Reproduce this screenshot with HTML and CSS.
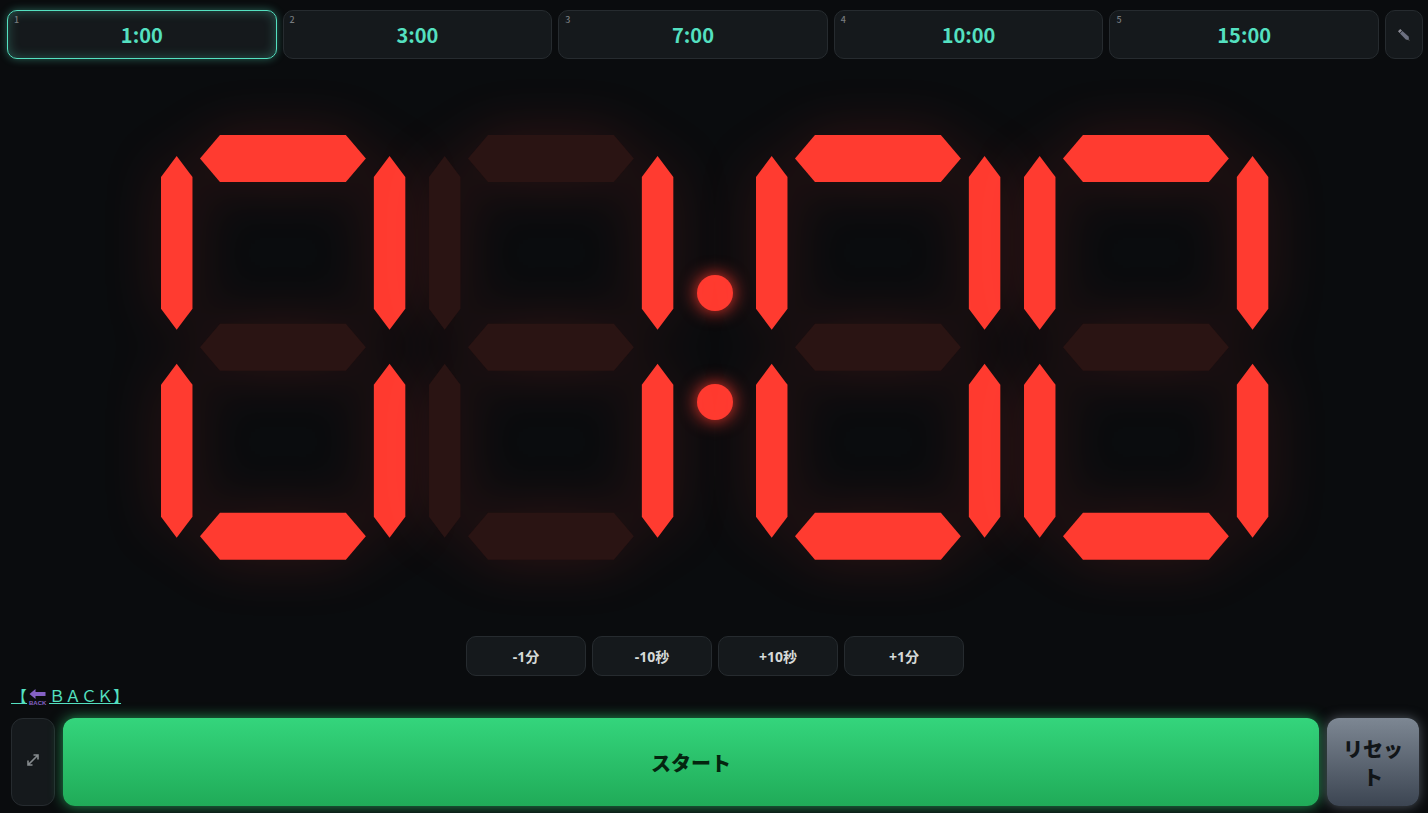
FILE: index.html
```html
<!DOCTYPE html>
<html lang="ja">

<head>
  <meta charset="UTF-8">
  <meta name="viewport" content="width=device-width, initial-scale=1">
  <title>タイマー</title>
  <link rel="stylesheet" href="styles.css">
</head>

<body>

  <!-- segment shapes shared by all digits -->
  <svg class="defs" width="0" height="0" aria-hidden="true">
    <defs>
      <polygon id="seg-h" points="0,23.5 20,0 146,0 166,23.5 146,47 20,47" />
      <polygon id="seg-v" points="15.7,0 31.5,21 31.5,153 15.7,174 0,153 0,21" />
    </defs>
  </svg>

  <nav class="presets">
    <button class="preset active"><span class="key">1</span>1:00</button>
    <button class="preset"><span class="key">2</span>3:00</button>
    <button class="preset"><span class="key">3</span>7:00</button>
    <button class="preset"><span class="key">4</span>10:00</button>
    <button class="preset"><span class="key">5</span>15:00</button>
    <button class="edit" aria-label="編集">
      <svg width="14" height="14" viewBox="0 0 14 14">
        <path d="M1 3.2 3.2 1 5 2.6 2.6 5z" fill="#8b8b95" />
        <path d="M3 5.4 5.4 3 11.6 8.6 12 10.6 10.6 12 8.8 11.4z" fill="#6c7080" />
        <path d="M11.6 11 13 12.8 11 12z" fill="#777" />
      </svg>
    </button>
  </nav>

  <main class="stage">
    <div class="clock" role="timer" aria-label="01:00">
      <svg class="digit" viewBox="0 0 245 425">
        <use class="on" href="#seg-h" x="39" y="0" />
        <use class="on" href="#seg-v" x="0" y="21" />
        <use class="on" href="#seg-v" x="213" y="21" />
        <use href="#seg-h" x="39" y="189" />
        <use class="on" href="#seg-v" x="0" y="229" />
        <use class="on" href="#seg-v" x="213" y="229" />
        <use class="on" href="#seg-h" x="39" y="378" />
      </svg>
      <svg class="digit" viewBox="0 0 245 425">
        <use href="#seg-h" x="39" y="0" />
        <use href="#seg-v" x="0" y="21" />
        <use class="on" href="#seg-v" x="213" y="21" />
        <use href="#seg-h" x="39" y="189" />
        <use href="#seg-v" x="0" y="229" />
        <use class="on" href="#seg-v" x="213" y="229" />
        <use href="#seg-h" x="39" y="378" />
      </svg>
      <div class="colon"><span></span><span></span></div>
      <svg class="digit" viewBox="0 0 245 425">
        <use class="on" href="#seg-h" x="39" y="0" />
        <use class="on" href="#seg-v" x="0" y="21" />
        <use class="on" href="#seg-v" x="213" y="21" />
        <use href="#seg-h" x="39" y="189" />
        <use class="on" href="#seg-v" x="0" y="229" />
        <use class="on" href="#seg-v" x="213" y="229" />
        <use class="on" href="#seg-h" x="39" y="378" />
      </svg>
      <svg class="digit" viewBox="0 0 245 425">
        <use class="on" href="#seg-h" x="39" y="0" />
        <use class="on" href="#seg-v" x="0" y="21" />
        <use class="on" href="#seg-v" x="213" y="21" />
        <use href="#seg-h" x="39" y="189" />
        <use class="on" href="#seg-v" x="0" y="229" />
        <use class="on" href="#seg-v" x="213" y="229" />
        <use class="on" href="#seg-h" x="39" y="378" />
      </svg>
    </div>
  </main>

  <div class="adjust">
    <button>-1分</button>
    <button>-10秒</button>
    <button>+10秒</button>
    <button>+1分</button>
  </div>

  <div class="back">
    <a href="#">【<svg class="back-icon" width="22" height="18" viewBox="0 0 22 18" aria-hidden="true"><path d="M2.5 6 8.5 1V4H18.5V8H8.5V11z" fill="#8561c5" /><text x="2" y="17">BACK</text></svg>ＢＡＣＫ<span class="half">】</span></a>
  </div>

  <footer class="controls">
    <button class="full" aria-label="全画面">
      <svg width="12" height="12" viewBox="0 0 12 12">
        <path d="M6.5 1H11V5.5M5.5 11H1V6.5M11 1 1 11" fill="none" stroke="#858a8d" stroke-width="1.6" />
      </svg>
    </button>
    <button class="start">スタート</button>
    <button class="reset">リセット</button>
  </footer>

</body>

</html>
```
FILE: styles.css
```css
:root {
  --bg: #0a0c0e;
  --panel: #15191c;
  --line: #262b2f;
  --accent: #54e0c0;
  --led: #ff3b30;
  --led-off: #2a1413;
}

* {
  box-sizing: border-box;
}

body {
  margin: 0;
  min-height: 100vh;
  padding: 10px 5px 7px 7px;
  display: flex;
  flex-direction: column;
  background-color: var(--bg);
  color: #d5dad8;
  font-family: "Noto Sans", "Noto Sans CJK JP", sans-serif;
  overflow: hidden;
}

button {
  margin: 0;
  padding: 0;
  border: 1px solid var(--line);
  border-radius: 10px;
  background-color: var(--panel);
  color: inherit;
  font-family: inherit;
  font-weight: 700;
  cursor: pointer;
}

.defs {
  position: absolute;
}

/* presets */
.presets {
  display: flex;
  gap: 6px;
  height: 49px;
}

.preset {
  position: relative;
  flex: 1;
  padding-bottom: 1px;
  color: var(--accent);
  font-family: "Noto Sans CJK JP", sans-serif;
  font-size: 20px;
}

.preset.active {
  border-color: var(--accent);
  box-shadow: 0 0 8px rgba(84, 224, 192, 0.4), inset 0 0 12px rgba(84, 224, 192, 0.3);
}

.key {
  position: absolute;
  top: 3px;
  left: 6px;
  color: #777b7e;
  font-size: 9px;
  font-weight: 500;
  line-height: 12px;
}

.edit {
  width: 38px;
}

.edit svg,
.full svg {
  display: block;
  margin: auto;
}

/* clock */
.stage {
  flex: 1;
  display: flex;
  align-items: center;
  justify-content: center;
}

.clock {
  width: 78.2%;
  display: flex;
  align-items: center;
  gap: 23px;
}

.digit {
  flex: 1;
  min-width: 0;
  overflow: visible;
  fill: var(--led-off);
  filter: drop-shadow(0 0 28px rgba(255, 59, 48, 0.16));
}

.digit .on {
  fill: var(--led);
}

.colon {
  display: flex;
  flex-direction: column;
  gap: 73px;
}

.colon span {
  width: 36px;
  height: 36px;
  border-radius: 50%;
  background-color: var(--led);
  box-shadow: 0 0 18px var(--led);
}

/* time adjustment */
.adjust {
  display: flex;
  justify-content: center;
  gap: 6px;
}

.adjust button {
  width: 120px;
  height: 40px;
  font-size: 14px;
}

.back {
  height: 42px;
  padding: 9px 4px 0;
  font-family: "Liberation Sans", "Noto Sans CJK JP", sans-serif;
  font-size: 16px;
  line-height: 24px;
}

.back a {
  color: var(--accent);
}

.back-icon {
  vertical-align: -4px;
}

.back-icon text {
  fill: #8561c5;
  font-size: 6px;
  font-weight: 700;
}

/* closing bracket takes half of its em box */
.half {
  font-feature-settings: "halt";
}

/* bottom bar */
.controls {
  display: flex;
  gap: 8px;
  padding: 0 4px;
  height: 88px;
}

.controls button {
  border-radius: 12px;
}

.controls .full {
  width: 44px;
  padding-bottom: 4px;
}

.controls .start,
.controls .reset {
  border: 0;
  font-size: 20px;
  font-weight: 900;
  line-height: 28px;
}

.controls .start {
  flex: 1;
  padding-top: 3px;
  background: linear-gradient(#34d57c, #20ab58);
  color: #04250f;
  box-shadow: 0 0 14px rgba(46, 204, 113, 0.7);
}

.controls .reset {
  width: 92px;
  padding: 3px 14px 0;
  background: linear-gradient(#7d8793, #3c4552);
  color: #111518;
  box-shadow: 0 0 12px rgba(125, 135, 147, 0.6);
}
```
